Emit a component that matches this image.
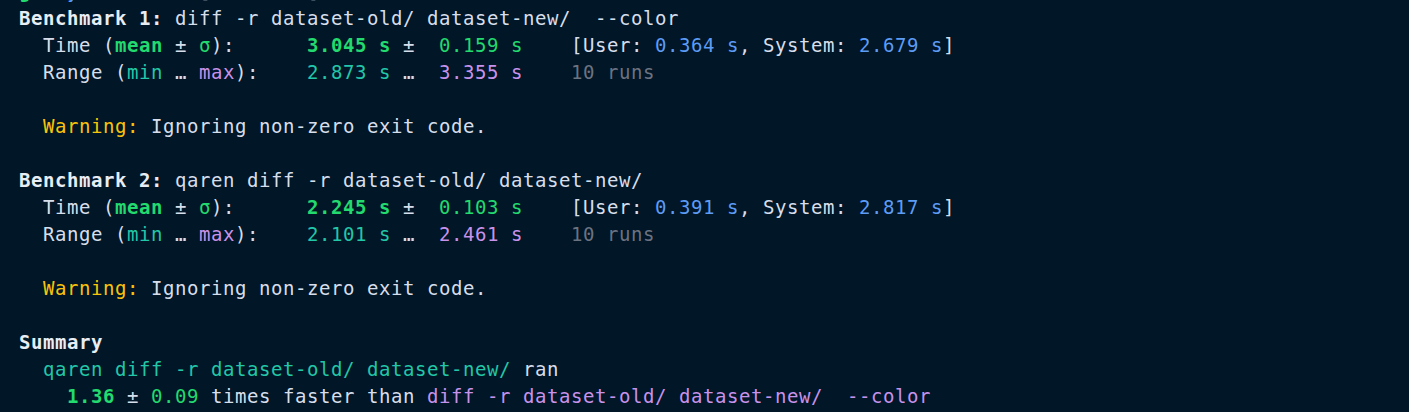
import React from 'react';

// terminal palette
const C = {
  fg: 'text-[#d6deeb]',
  bold: 'text-[#e8edf4] font-bold',
  green: 'text-[#22da6e]',
  greenB: 'text-[#22da6e] font-bold',
  teal: 'text-[#21c7a8]',
  purple: 'text-[#c792ea]',
  blue: 'text-[#5d9cf5]',
  gray: 'text-[#6b7380]',
  yellow: 'text-[#f7c409]',
};

// each line is a list of [text, color] pairs; empty list = blank line
const lines = [
  [['g', C.greenB], ['   ', C.fg], ['y', C.blue], ['    /     [        [    /    /', C.fg]],
  [['Benchmark 1:', C.bold], [' diff -r dataset-old/ dataset-new/  --color', C.fg]],
  [
    ['  Time (', C.fg], ['mean', C.greenB], [' ± ', C.fg], ['σ', C.green], ['):      ', C.fg],
    ['3.045 s', C.greenB], [' ±  ', C.fg], ['0.159 s', C.green], ['    [User: ', C.fg],
    ['0.364 s', C.blue], [', System: ', C.fg], ['2.679 s', C.blue], [']', C.fg],
  ],
  [
    ['  Range (', C.fg], ['min', C.teal], [' … ', C.fg], ['max', C.purple], ['):    ', C.fg],
    ['2.873 s', C.teal], [' …  ', C.fg], ['3.355 s', C.purple], ['    ', C.fg], ['10 runs', C.gray],
  ],
  [],
  [['  ', C.fg], ['Warning:', C.yellow], [' Ignoring non-zero exit code.', C.fg]],
  [],
  [['Benchmark 2:', C.bold], [' qaren diff -r dataset-old/ dataset-new/', C.fg]],
  [
    ['  Time (', C.fg], ['mean', C.greenB], [' ± ', C.fg], ['σ', C.green], ['):      ', C.fg],
    ['2.245 s', C.greenB], [' ±  ', C.fg], ['0.103 s', C.green], ['    [User: ', C.fg],
    ['0.391 s', C.blue], [', System: ', C.fg], ['2.817 s', C.blue], [']', C.fg],
  ],
  [
    ['  Range (', C.fg], ['min', C.teal], [' … ', C.fg], ['max', C.purple], ['):    ', C.fg],
    ['2.101 s', C.teal], [' …  ', C.fg], ['2.461 s', C.purple], ['    ', C.fg], ['10 runs', C.gray],
  ],
  [],
  [['  ', C.fg], ['Warning:', C.yellow], [' Ignoring non-zero exit code.', C.fg]],
  [],
  [['Summary', C.bold]],
  [['  ', C.fg], ['qaren diff -r dataset-old/ dataset-new/', C.teal], [' ran', C.fg]],
  [
    ['    ', C.fg], ['1.36', C.greenB], [' ± ', C.fg], ['0.09', C.green], [' times faster than ', C.fg],
    ['diff -r dataset-old/ dataset-new/  --color', C.purple],
  ],
];

export default function App() {
  return (
    <div className="w-[1409px] h-[412px] overflow-hidden bg-[#011627]">
      <div className="-mt-[22px] pl-[19px] font-['DejaVu_Sans_Mono',monospace] text-[19px] tracking-[0.56px] leading-[27px] whitespace-pre">
        {lines.map((parts, i) => (
          <div key={i} className="h-[27px]">
            {parts.map(([t, c], j) => (
              <span key={j} className={c}>{t}</span>
            ))}
          </div>
        ))}
      </div>
    </div>
  );
}
